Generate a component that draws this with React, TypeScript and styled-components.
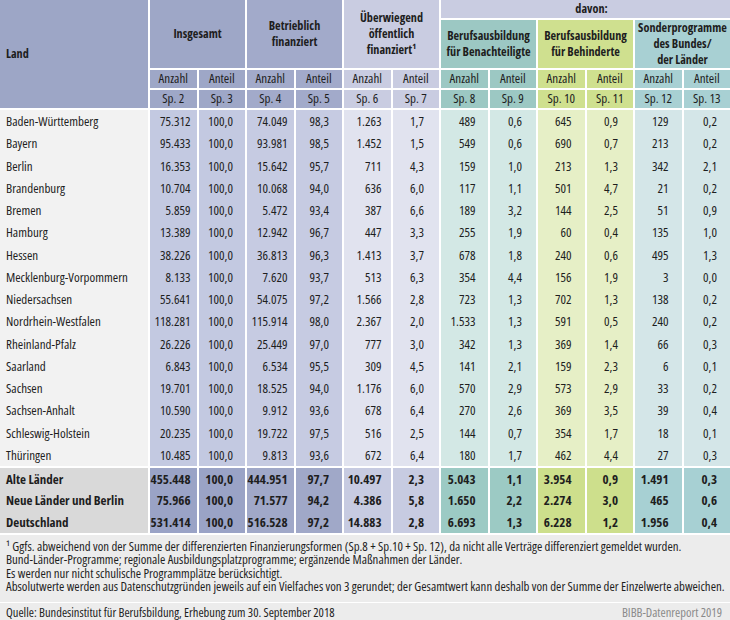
import React from "react";
import styled, { createGlobalStyle } from "styled-components";

const GlobalStyle = createGlobalStyle`
  html, body { margin: 0; padding: 0; background: #ffffff; }
  body {
    font-family: "Open Sans", "DejaVu Sans Condensed", sans-serif;
    font-stretch: 75%;
    color: #1e1e1e;
  }
`;

type Group = { head: string; data: string; sum: string; pads: [number, number] };

const LAND = { head: "#9da6c6", data: "#f2f2f2", sum: "#d9d9d9" };

const GROUPS: Group[] = [
  { head: "#9ea7c7", data: "#c3c9e1", sum: "#9aa3c6", pads: [6, 12] },
  { head: "#a2aaca", data: "#c6cbe2", sum: "#a0a8c8", pads: [6, 13] },
  { head: "#c9cce1", data: "#e1e3ef", sum: "#c7cbe1", pads: [9, 15] },
  { head: "#9cc8c3", data: "#d3e8e5", sum: "#9ccac4", pads: [12, 14] },
  { head: "#cfe08f", data: "#e6efc6", sum: "#cddf8c", pads: [13, 15] },
  { head: "#a8d0d3", data: "#d4e6e8", sum: "#a7d0d3", pads: [13, 13] },
];

const ROWS: string[][] = [
  ["Baden-Württemberg", "75.312", "100,0", "74.049", "98,3", "1.263", "1,7", "489", "0,6", "645", "0,9", "129", "0,2"],
  ["Bayern", "95.433", "100,0", "93.981", "98,5", "1.452", "1,5", "549", "0,6", "690", "0,7", "213", "0,2"],
  ["Berlin", "16.353", "100,0", "15.642", "95,7", "711", "4,3", "159", "1,0", "213", "1,3", "342", "2,1"],
  ["Brandenburg", "10.704", "100,0", "10.068", "94,0", "636", "6,0", "117", "1,1", "501", "4,7", "21", "0,2"],
  ["Bremen", "5.859", "100,0", "5.472", "93,4", "387", "6,6", "189", "3,2", "144", "2,5", "51", "0,9"],
  ["Hamburg", "13.389", "100,0", "12.942", "96,7", "447", "3,3", "255", "1,9", "60", "0,4", "135", "1,0"],
  ["Hessen", "38.226", "100,0", "36.813", "96,3", "1.413", "3,7", "678", "1,8", "240", "0,6", "495", "1,3"],
  ["Mecklenburg-Vorpommern", "8.133", "100,0", "7.620", "93,7", "513", "6,3", "354", "4,4", "156", "1,9", "3", "0,0"],
  ["Niedersachsen", "55.641", "100,0", "54.075", "97,2", "1.566", "2,8", "723", "1,3", "702", "1,3", "138", "0,2"],
  ["Nordrhein-Westfalen", "118.281", "100,0", "115.914", "98,0", "2.367", "2,0", "1.533", "1,3", "591", "0,5", "240", "0,2"],
  ["Rheinland-Pfalz", "26.226", "100,0", "25.449", "97,0", "777", "3,0", "342", "1,3", "369", "1,4", "66", "0,3"],
  ["Saarland", "6.843", "100,0", "6.534", "95,5", "309", "4,5", "141", "2,1", "159", "2,3", "6", "0,1"],
  ["Sachsen", "19.701", "100,0", "18.525", "94,0", "1.176", "6,0", "570", "2,9", "573", "2,9", "33", "0,2"],
  ["Sachsen-Anhalt", "10.590", "100,0", "9.912", "93,6", "678", "6,4", "270", "2,6", "369", "3,5", "39", "0,4"],
  ["Schleswig-Holstein", "20.235", "100,0", "19.722", "97,5", "516", "2,5", "144", "0,7", "354", "1,7", "18", "0,1"],
  ["Thüringen", "10.485", "100,0", "9.813", "93,6", "672", "6,4", "180", "1,7", "462", "4,4", "27", "0,3"],
];

const SUMMARY: string[][] = [
  ["Alte Länder", "455.448", "100,0", "444.951", "97,7", "10.497", "2,3", "5.043", "1,1", "3.954", "0,9", "1.491", "0,3"],
  ["Neue Länder und Berlin", "75.966", "100,0", "71.577", "94,2", "4.386", "5,8", "1.650", "2,2", "2.274", "3,0", "465", "0,6"],
  ["Deutschland", "531.414", "100,0", "516.528", "97,2", "14.883", "2,8", "6.693", "1,3", "6.228", "1,2", "1.956", "0,4"],
];

const COLS = "148px repeat(12, minmax(0, 1fr))";

const Page = styled.div`
  width: 730px;
  display: flex;
  flex-direction: column;
  gap: 2px;
  background: #ffffff;
`;

const HeaderGrid = styled.div`
  display: grid;
  grid-template-columns: ${COLS};
  grid-template-rows: 18px 48px 18px 18px;
  gap: 2px;
`;

const HeadCell = styled.div<{ $bg: string; $col: string; $row: string; $bold?: boolean; $left?: boolean; $shift?: number }>`
  grid-column: ${(p) => p.$col};
  grid-row: ${(p) => p.$row};
  background: ${(p) => p.$bg};
  display: flex;
  align-items: center;
  justify-content: ${(p) => (p.$left ? "flex-start" : "center")};
  text-align: ${(p) => (p.$left ? "left" : "center")};
  padding-left: ${(p) => (p.$left ? 6 : p.$shift ?? 0)}px;
  font-size: ${(p) => (p.$bold ? 12.2 : 13)}px;
  line-height: 15.8px;
  font-weight: ${(p) => (p.$bold ? 700 : 400)};
  white-space: nowrap;
`;

const BodyGrid = styled.div<{ $rowH: number }>`
  display: grid;
  grid-template-columns: ${COLS};
  grid-auto-rows: ${(p) => p.$rowH}px;
  column-gap: 2px;
`;

const LandCell = styled.div<{ $bg: string; $bold?: boolean }>`
  background: ${(p) => p.$bg};
  display: flex;
  align-items: center;
  padding-left: 6px;
  font-size: 13px;
  font-weight: ${(p) => (p.$bold ? 700 : 400)};
  white-space: nowrap;
`;

const NumCell = styled.div<{ $bg: string; $pad: number; $bold?: boolean }>`
  background: ${(p) => p.$bg};
  display: flex;
  align-items: center;
  justify-content: flex-end;
  padding-right: ${(p) => p.$pad}px;
  font-size: 13px;
  font-weight: ${(p) => (p.$bold ? 700 : 400)};
  white-space: nowrap;
`;

const Footer = styled.div`
  display: flex;
  flex-direction: column;
  gap: 1px;
  background: #ffffff;
`;

const Notes = styled.div`
  background: #ececec;
  padding: 5px 6px 8px;
  height: 54.5px;
  display: flex;
  flex-direction: column;
`;

const NoteLine = styled.div`
  height: 13.6px;
  font-size: 12.8px;
  line-height: 13.6px;
  white-space: nowrap;
`;

const SourceBar = styled.div`
  background: #ececec;
  height: 19px;
  display: flex;
  align-items: center;
  justify-content: space-between;
  padding: 0 8px 0 6px;
  font-size: 12.5px;
`;

const Credit = styled.span`
  color: #8a8a8a;
`;

function colIndex(i: number) {
  return Math.floor(i / 2);
}

export default function App() {
  const groupLabels: { label: React.ReactNode; col: string; row: string; bg: string }[] = [
    { label: "Insgesamt", col: "2 / 4", row: "1 / 3", bg: GROUPS[0].head },
    { label: <>Betrieblich<br />finanziert</>, col: "4 / 6", row: "1 / 3", bg: GROUPS[1].head },
    { label: <>Überwiegend<br />öffentlich<br />finanziert¹</>, col: "6 / 8", row: "1 / 3", bg: GROUPS[2].head },
    { label: <>Berufsausbildung<br />für Benachteiligte</>, col: "8 / 10", row: "2 / 3", bg: GROUPS[3].head },
    { label: <>Berufsausbildung<br />für Behinderte</>, col: "10 / 12", row: "2 / 3", bg: GROUPS[4].head },
    { label: <>Sonderprogramme<br />des Bundes/<br />der Länder</>, col: "12 / 14", row: "2 / 3", bg: GROUPS[5].head },
  ];

  return (
    <>
      <GlobalStyle />
      <Page>
        <HeaderGrid>
          <HeadCell $bg={LAND.head} $col="1 / 2" $row="1 / 5" $bold $left>
            Land
          </HeadCell>
          <HeadCell $bg="#c9cce1" $col="8 / 14" $row="1 / 2" $bold $shift={12}>
            davon:
          </HeadCell>
          {groupLabels.map((g, i) => (
            <HeadCell key={i} $bg={g.bg} $col={g.col} $row={g.row} $bold>
              {g.label}
            </HeadCell>
          ))}
          {Array.from({ length: 12 }).map((_, i) => (
            <HeadCell key={"u" + i} $bg={GROUPS[colIndex(i)].head} $col={`${i + 2} / ${i + 3}`} $row="3 / 4">
              {i % 2 === 0 ? "Anzahl" : "Anteil"}
            </HeadCell>
          ))}
          {Array.from({ length: 12 }).map((_, i) => (
            <HeadCell key={"s" + i} $bg={GROUPS[colIndex(i)].head} $col={`${i + 2} / ${i + 3}`} $row="4 / 5">
              Sp. {i + 2}
            </HeadCell>
          ))}
        </HeaderGrid>

        <BodyGrid $rowH={22.25}>
          {ROWS.map((r) => (
            <React.Fragment key={r[0]}>
              <LandCell $bg={LAND.data}>{r[0]}</LandCell>
              {r.slice(1).map((v, i) => (
                <NumCell key={i} $bg={GROUPS[colIndex(i)].data} $pad={GROUPS[colIndex(i)].pads[i % 2]}>
                  {v}
                </NumCell>
              ))}
            </React.Fragment>
          ))}
        </BodyGrid>

        <BodyGrid $rowH={21.5}>
          {SUMMARY.map((r) => (
            <React.Fragment key={r[0]}>
              <LandCell $bg={LAND.sum} $bold>
                {r[0]}
              </LandCell>
              {r.slice(1).map((v, i) => (
                <NumCell key={i} $bg={GROUPS[colIndex(i)].sum} $pad={GROUPS[colIndex(i)].pads[i % 2]} $bold>
                  {v}
                </NumCell>
              ))}
            </React.Fragment>
          ))}
        </BodyGrid>

        <Footer>
          <Notes>
            <NoteLine>
              ¹ Ggfs. abweichend von der Summe der differenzierten Finanzierungsformen (Sp.8 + Sp.10 + Sp. 12), da nicht alle Verträge differenziert gemeldet wurden.
            </NoteLine>
            <NoteLine>Bund-Länder-Programme; regionale Ausbildungsplatzprogramme; ergänzende Maßnahmen der Länder.</NoteLine>
            <NoteLine>Es werden nur nicht schulische Programmplätze berücksichtigt.</NoteLine>
            <NoteLine>
              Absolutwerte werden aus Datenschutzgründen jeweils auf ein Vielfaches von 3 gerundet; der Gesamtwert kann deshalb von der Summe der Einzelwerte abweichen.
            </NoteLine>
          </Notes>
          <SourceBar>
            <span>Quelle: Bundesinstitut für Berufsbildung, Erhebung zum 30. September 2018</span>
            <Credit>BIBB-Datenreport 2019</Credit>
          </SourceBar>
        </Footer>
      </Page>
    </>
  );
}
